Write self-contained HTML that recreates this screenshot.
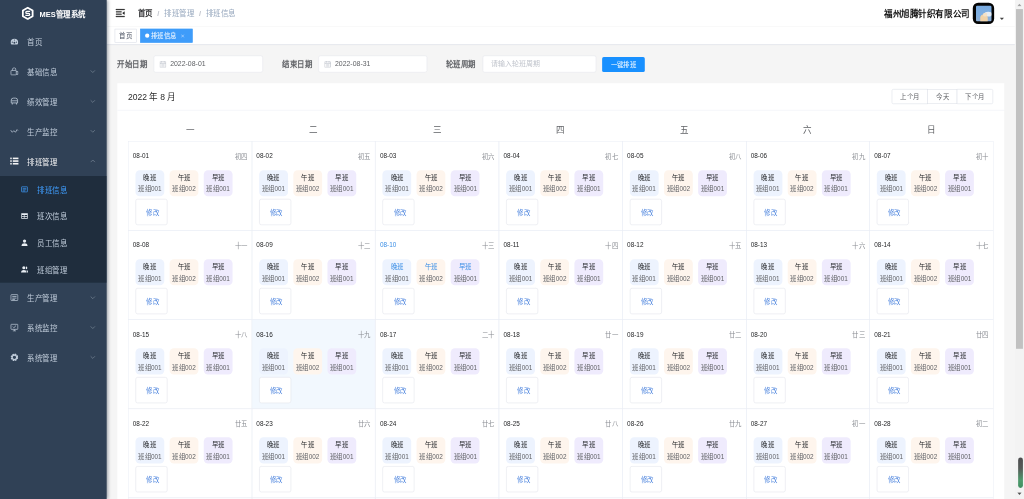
<!DOCTYPE html>
<html lang="zh-CN"><head><meta charset="utf-8"><title>MES管理系统</title><style>
*{box-sizing:border-box;margin:0;padding:0}
html,body{width:1024px;height:499px;overflow:hidden;background:#fff}
body{font-family:"Liberation Sans",sans-serif;color:#303133;font-size:14px;-webkit-font-smoothing:antialiased}
#app{filter:blur(.3px);position:absolute;left:0;top:0;width:1920px;height:936px;transform:scale(.5333333);transform-origin:0 0;overflow:hidden;background:#f5f5f5}
.a{position:absolute;white-space:nowrap}
/* sidebar */
#side{position:absolute;left:0;top:0;width:200px;height:936px;background:#304156;box-shadow:2px 0 6px rgba(0,21,41,.35);z-index:5;overflow:hidden}
#side .ttl{position:absolute;left:74px;top:1px;width:110px;line-height:51px;font-size:14px;font-weight:700;color:#fff;white-space:nowrap}
.mi{position:absolute;left:0;width:200px;height:56px;line-height:56px;color:#bfcbd9;font-size:14px;white-space:nowrap}
.mi .tx{position:absolute;left:51px;top:1.500px}
.mi svg.ic{position:absolute;left:19px;top:20px;width:16px;height:16px}
.mi .ar{position:absolute;left:168px;top:22px;width:12px;height:12px}
.sub{position:absolute;left:0;top:330px;width:200px;height:200px;background:#1f2d3d}
.si{position:absolute;left:0;width:200px;height:50px;line-height:50px;color:#bfcbd9;font-size:14px;white-space:nowrap}
.si .tx{position:absolute;left:70px;top:1.200px}
.si svg.ic{position:absolute;left:39px;top:18px;width:14px;height:14px}
/* navbar */
#nav{position:absolute;left:200px;top:0;width:1703px;height:50px;background:#fff;box-shadow:0 1px 4px rgba(0,21,41,.08)}
#tags{position:absolute;left:200px;top:50px;width:1703px;height:34px;background:#fff;border-bottom:1px solid #d8dce5;box-shadow:0 1px 3px 0 rgba(0,0,0,.12),0 0 3px 0 rgba(0,0,0,.04)}
.tag{position:absolute;top:4px;height:26px;line-height:25px;border:1px solid #d8dce5;background:#fff;color:#495060;font-size:12px;white-space:nowrap;overflow:hidden}
/* filter */
.lb{position:absolute;top:104px;height:32px;line-height:32px;font-size:14px;font-weight:700;color:#606266;white-space:nowrap}
.inp{position:absolute;top:104px;height:32px;background:#fff;border:1px solid #e4e7ec;border-radius:4px;font-size:13px;line-height:30px;color:#606266;white-space:nowrap;overflow:hidden}
/* calendar */
#card{position:absolute;left:220px;top:155.500px;width:1662.5px;height:800px;background:#fff}
#chead{position:absolute;left:0;top:0;width:1662.5px;height:51.500px;border-bottom:1px solid #ebeef5}
#chead .t{position:absolute;left:20px;top:1.500px;line-height:52px;font-size:16px;color:#2a2a2a;white-space:nowrap}
.bg{position:absolute;top:11.500px;height:28px;border:1px solid #dcdfe6;background:#fff;color:#606266;font-size:12px;line-height:26px;text-align:center;white-space:nowrap;overflow:hidden}
.wd{position:absolute;top:65px;height:46px;line-height:46px;width:232px;text-align:center;font-size:16px;color:#606266}
.cell{position:absolute;width:232.71px;height:168px;border:1px solid #ebeef5;overflow:hidden}
.cell.sel{background:#f2f8fe}
.cell .d{position:absolute;left:8px;top:18px;line-height:18px;font-size:12px;color:#1f2022;white-space:nowrap}
.cell .l{position:absolute;right:8px;top:19px;line-height:18px;font-size:12px;color:#8a8d93;white-space:nowrap;text-align:right}
.tg{position:absolute;top:53px;width:54px;height:49px;border-radius:8px;text-align:center;font-size:12px;white-space:nowrap;overflow:hidden}
.tg b{position:absolute;left:-10px;width:74px;top:5px;line-height:18px;font-weight:400;color:#1f2124;font-size:12px}
.tg i{position:absolute;left:-10px;width:74px;top:27px;line-height:18px;font-style:normal;color:#606266;font-size:12px}
.t1{left:13px;background:#edf3fe}
.t2{left:77px;background:#fef5ed}
.t3{left:141px;background:#efebfd}
.today .d,.today .tg b{color:#3a8ee6}
.bt{position:absolute;left:13px;top:107px;width:60px;height:49px;border:1px solid #e0e3ea;border-radius:4px;background:#fff;color:#4f86de;font-size:12px;line-height:50px;text-align:center;white-space:nowrap;overflow:hidden;padding-left:5px}
/* scrollbar */
#sb{position:absolute;left:1903px;top:0;width:17px;height:936px;background:#f3f3f3;z-index:9}
</style></head><body>
<div id="app">
<div id="side">
<svg class="a" style="left:39.500px;top:12px;width:24px;height:26px" viewBox="0 0 27 28"><path d="M13.500 2.200L23.800 8v12L13.500 25.800 3.200 20V8z" fill="none" stroke="#fff" stroke-width="3.800" stroke-linejoin="round"/><path d="M18.500 10h-7a2.100 2.100 0 0 0 0 4.200h4a2.100 2.100 0 0 1 0 4.200h-7" fill="none" stroke="#fff" stroke-width="2.700"/></svg><div class="ttl">MES管理系统</div>
<div class="mi" style="top:50px;color:#bfcbd9"><svg class="ic" viewBox="0 0 16 16"><path d="M8 2.5a7 7 0 0 0-7 7c0 1.6.5 3 1.4 4h11.2c.9-1 1.4-2.4 1.4-4a7 7 0 0 0-7-7z" fill="#bfcbd9"/><circle cx="8" cy="10" r="1.8" fill="#304156"/><circle cx="4" cy="9" r="1" fill="#304156"/><circle cx="12" cy="9" r="1" fill="#304156"/><circle cx="8" cy="5" r="1" fill="#304156"/></svg><span class="tx">首页</span></div>
<div class="mi" style="top:106px;color:#bfcbd9"><svg class="ic" viewBox="0 0 16 16" fill="none" stroke="#bfcbd9" stroke-width="1.4"><rect x="1.5" y="6" width="10" height="8.5" rx="1"/><path d="M4.5 6V4a3 3 0 0 1 6 0v2M11.5 8h3v5.5h-3"/></svg><span class="tx">基础信息</span><svg class="ar" viewBox="0 0 12 12" fill="none" stroke="#7f8d9e" stroke-width="1.200"><path d="M2 4l4 4 4-4"/></svg></div>
<div class="mi" style="top:162px;color:#bfcbd9"><svg class="ic" viewBox="0 0 16 16" fill="none" stroke="#bfcbd9" stroke-width="1.5"><path d="M2 11V6a4 4 0 0 1 4-4h4a4 4 0 0 1 4 4v5zM4 11v3M12 11v3M2 7h12"/></svg><span class="tx">绩效管理</span><svg class="ar" viewBox="0 0 12 12" fill="none" stroke="#7f8d9e" stroke-width="1.200"><path d="M2 4l4 4 4-4"/></svg></div>
<div class="mi" style="top:218px;color:#bfcbd9"><svg class="ic" viewBox="0 0 16 16" fill="none" stroke="#bfcbd9" stroke-width="1.4"><path d="M1 6l3 4 3-3 3 3 3-5 2 2"/></svg><span class="tx">生产监控</span><svg class="ar" viewBox="0 0 12 12" fill="none" stroke="#7f8d9e" stroke-width="1.200"><path d="M2 4l4 4 4-4"/></svg></div>
<div class="mi" style="top:274px;color:#f4f4f5"><svg class="ic" viewBox="0 0 16 16" fill="#f4f4f5"><rect x="0" y="1.5" width="3" height="3"/><rect x="5" y="1.5" width="11" height="3"/><rect x="0" y="6.5" width="3" height="3"/><rect x="5" y="6.5" width="11" height="3"/><rect x="0" y="11.5" width="3" height="3"/><rect x="5" y="11.5" width="11" height="3"/></svg><span class="tx">排班管理</span><svg class="ar" viewBox="0 0 12 12" fill="none" stroke="#7f8d9e" stroke-width="1.200"><path d="M2 8l4-4 4 4"/></svg></div>
<div class="sub">
<div class="si" style="top:0px;color:#409eff"><svg class="ic" viewBox="0 0 16 16" fill="none" stroke="#409eff" stroke-width="1.4"><rect x="1.5" y="2.5" width="13" height="11" rx="1"/><path d="M4 6h8M4 9h8M4 11.5h5"/></svg><span class="tx">排班信息</span></div>
<div class="si" style="top:50px;color:#bfcbd9"><svg class="ic" viewBox="0 0 16 16" fill="#e8edf3"><path d="M1 2h14v12H1zM2.5 6v2.5h4V6zm5.5 0v2.5h5.500V6zM2.500 10v2.500h4V10zm5.500 0v2.500h5.500V10z" fill-rule="evenodd"/></svg><span class="tx">班次信息</span></div>
<div class="si" style="top:100px;color:#bfcbd9"><svg class="ic" viewBox="0 0 16 16" fill="#e8edf3"><circle cx="8" cy="4.500" r="3.500"/><path d="M1.500 15c0-4 3-5.500 6.500-5.500s6.500 1.500 6.500 5.500z"/></svg><span class="tx">员工信息</span></div>
<div class="si" style="top:150px;color:#bfcbd9"><svg class="ic" viewBox="0 0 16 16" fill="#e8edf3"><circle cx="6.500" cy="4.500" r="3.300"/><path d="M0.500 15c0-4 2.700-5.500 6-5.500s6 1.500 6 5.500z"/><path d="M11 2a3 3 0 0 1 0 6zM12.500 9.500c2 .5 3 2.500 3 5.500h-2z"/></svg><span class="tx">班组管理</span></div>
</div>
<div class="mi" style="top:530px"><svg class="ic" viewBox="0 0 16 16" fill="none" stroke="#bfcbd9" stroke-width="1.4"><rect x="1.5" y="2.5" width="13" height="11" rx="1"/><path d="M4 6h8M4 9h8M4 11.5h5"/></svg><span class="tx">生产管理</span><svg class="ar" viewBox="0 0 12 12" fill="none" stroke="#7f8d9e" stroke-width="1.200"><path d="M2 4l4 4 4-4"/></svg></div>
<div class="mi" style="top:586px"><svg class="ic" viewBox="0 0 16 16" fill="none" stroke="#bfcbd9" stroke-width="1.4"><rect x="1.500" y="2" width="13" height="9.500" rx="1"/><path d="M5 14.500h6M8 11.500v3M5 6.500l2 2 4-4"/></svg><span class="tx">系统监控</span><svg class="ar" viewBox="0 0 12 12" fill="none" stroke="#7f8d9e" stroke-width="1.200"><path d="M2 4l4 4 4-4"/></svg></div>
<div class="mi" style="top:642px"><svg class="ic" viewBox="0 0 16 16"><circle cx="8" cy="8" r="5.200" fill="none" stroke="#bfcbd9" stroke-width="3.600" stroke-dasharray="2.700 1.380"/><circle cx="8" cy="8" r="4.400" fill="none" stroke="#bfcbd9" stroke-width="2.400"/></svg><span class="tx">系统管理</span><svg class="ar" viewBox="0 0 12 12" fill="none" stroke="#7f8d9e" stroke-width="1.200"><path d="M2 4l4 4 4-4"/></svg></div>
</div>
<div id="nav">
<svg class="a" style="left:14.500px;top:14px;width:21px;height:21px;transform:rotate(180deg)" viewBox="0 0 1024 1024" fill="#111" stroke="#111" stroke-width="26"><path d="M408 442h480c4.400 0 8-3.600 8-8v-56c0-4.400-3.600-8-8-8H408c-4.400 0-8 3.600-8 8v56c0 4.400 3.600 8 8 8zm-8 204c0 4.400 3.600 8 8 8h480c4.400 0 8-3.600 8-8v-56c0-4.400-3.600-8-8-8H408c-4.400 0-8 3.600-8 8v56zm504-486H120c-4.400 0-8 3.600-8 8v56c0 4.400 3.600 8 8 8h784c4.400 0 8-3.600 8-8v-56c0-4.400-3.600-8-8-8zm0 632H120c-4.400 0-8 3.600-8 8v56c0 4.400 3.600 8 8 8h784c4.400 0 8-3.600 8-8v-56c0-4.400-3.600-8-8-8zM142.400 642.100L298.700 519a8.840 8.840 0 0 0 0-13.900L142.400 381.900c-5.800-4.600-14.400-.5-14.400 6.900v246.300a8.900 8.900 0 0 0 14.400 7z"/></svg><span class="a" style="left:58px;top:0;line-height:51px;font-size:14px;font-weight:700;color:#303133">首页</span><span class="a" style="left:95px;top:0;line-height:51px;font-size:14px;font-weight:700;color:#c0c4cc">/</span><span class="a" style="left:108px;top:0;line-height:51px;font-size:14px;color:#97a8be">排班管理</span><span class="a" style="left:173px;top:0;line-height:51px;font-size:14px;font-weight:700;color:#c0c4cc">/</span><span class="a" style="left:186px;top:0;line-height:51px;font-size:14px;color:#97a8be">排班信息</span>
<span class="a" style="left:1456px;width:162px;text-align:right;top:1.500px;line-height:50px;font-size:16px;font-weight:700;color:#111">福州旭腾针织有限公司</span><div class="a" style="left:1624px;top:5px;width:40px;height:40px;border-radius:10px;background:#050505;overflow:hidden"><div class="a" style="left:5.500px;top:5.500px;width:29.500px;height:29.500px;border-radius:2px;overflow:hidden;background:linear-gradient(180deg,#78aae0 0%,#80b0e2 55%,#8fb0d6 100%)"><div class="a" style="left:16px;top:11px;width:14px;height:9px;border-radius:50%;background:#e6ecf3"></div><div class="a" style="left:8px;top:16px;width:14px;height:15px;border-radius:45% 45% 15% 15%;background:#f1d3a9"></div><div class="a" style="left:13px;top:13px;width:8px;height:7px;border-radius:50%;background:#f4e2c8"></div></div></div><svg class="a" style="left:1673.500px;top:32px;width:9px;height:7px" viewBox="0 0 10 8"><path d="M0.500 1.500h9L5 6.500z" fill="#444"/></svg>
</div>
<div id="tags"><div class="tag" style="left:15px;width:41px;padding-left:8px">首页</div><div class="tag" style="left:63px;width:97.500px;background:#3e9cfa;border-color:#3e9cfa;color:#fff"><span class="a" style="left:8px;top:8px;width:8px;height:8px;border-radius:50%;background:#fff"></span><span class="a" style="left:19px;top:0">排班信息</span><svg class="a" style="left:75px;top:9px;width:7px;height:7px" viewBox="0 0 7 7" stroke="#dbeaff" stroke-width="1" fill="none"><path d="M0.500 0.500l6 6M6.500 0.500l-6 6"/></svg></div></div>
<span class="lb" style="left:220px;width:57px">开始日期</span><div class="inp" style="left:288px;width:205px"><svg class="a" style="left:10px;top:9px;width:13px;height:13px" viewBox="0 0 13 13" fill="none" stroke="#c0c4cc" stroke-width="1.200"><rect x="1" y="2" width="11" height="10"/><path d="M1 5h11M4 0.500v3M9 0.500v3M3.500 7.500h6M3.500 9.800h6"/></svg><span class="a" style="left:30px;top:0">2022-08-01</span></div>
<span class="lb" style="left:529px;width:57px">结束日期</span><div class="inp" style="left:597px;width:204px"><svg class="a" style="left:10px;top:9px;width:13px;height:13px" viewBox="0 0 13 13" fill="none" stroke="#c0c4cc" stroke-width="1.200"><rect x="1" y="2" width="11" height="10"/><path d="M1 5h11M4 0.500v3M9 0.500v3M3.500 7.500h6M3.500 9.800h6"/></svg><span class="a" style="left:30px;top:0">2022-08-31</span></div>
<span class="lb" style="left:836px;width:57px">轮班周期</span><div class="inp" style="left:905px;width:213px"><span class="a" style="left:15px;top:0;color:#c0c4cc">请输入轮班周期</span></div>
<div class="a" style="left:1129px;top:107px;width:80px;height:28px;border-radius:3px;background:#1890ff;color:#fff;font-size:12px;line-height:28px;text-align:center;overflow:hidden">一键排班</div>
<div id="card">
<div id="chead"><span class="t">2022 年 8 月</span><div class="bg" style="left:1452.300px;width:68px;border-radius:3px 0 0 3px">上个月</div><div class="bg" style="left:1519.300px;width:56px">今天</div><div class="bg" style="left:1574.300px;width:68px;border-radius:0 3px 3px 0">下个月</div></div>
<div class="wd" style="left:20.00px">一</div><div class="wd" style="left:251.71px">二</div><div class="wd" style="left:483.43px">三</div><div class="wd" style="left:715.14px">四</div><div class="wd" style="left:946.86px">五</div><div class="wd" style="left:1178.57px">六</div><div class="wd" style="left:1410.29px">日</div>
<div class="cell" style="left:20.00px;top:109.5px"><span class="d">08-01</span><span class="l">初四</span><div class="tg t1"><b>晚班</b><i>班组001</i></div><div class="tg t2"><b>午班</b><i>班组002</i></div><div class="tg t3"><b>早班</b><i>班组001</i></div><div class="bt">修改</div></div>
<div class="cell" style="left:251.71px;top:109.5px"><span class="d">08-02</span><span class="l">初五</span><div class="tg t1"><b>晚班</b><i>班组001</i></div><div class="tg t2"><b>午班</b><i>班组002</i></div><div class="tg t3"><b>早班</b><i>班组001</i></div><div class="bt">修改</div></div>
<div class="cell" style="left:483.43px;top:109.5px"><span class="d">08-03</span><span class="l">初六</span><div class="tg t1"><b>晚班</b><i>班组001</i></div><div class="tg t2"><b>午班</b><i>班组002</i></div><div class="tg t3"><b>早班</b><i>班组001</i></div><div class="bt">修改</div></div>
<div class="cell" style="left:715.14px;top:109.5px"><span class="d">08-04</span><span class="l">初七</span><div class="tg t1"><b>晚班</b><i>班组001</i></div><div class="tg t2"><b>午班</b><i>班组002</i></div><div class="tg t3"><b>早班</b><i>班组001</i></div><div class="bt">修改</div></div>
<div class="cell" style="left:946.86px;top:109.5px"><span class="d">08-05</span><span class="l">初八</span><div class="tg t1"><b>晚班</b><i>班组001</i></div><div class="tg t2"><b>午班</b><i>班组002</i></div><div class="tg t3"><b>早班</b><i>班组001</i></div><div class="bt">修改</div></div>
<div class="cell" style="left:1178.57px;top:109.5px"><span class="d">08-06</span><span class="l">初九</span><div class="tg t1"><b>晚班</b><i>班组001</i></div><div class="tg t2"><b>午班</b><i>班组002</i></div><div class="tg t3"><b>早班</b><i>班组001</i></div><div class="bt">修改</div></div>
<div class="cell" style="left:1410.29px;top:109.5px"><span class="d">08-07</span><span class="l">初十</span><div class="tg t1"><b>晚班</b><i>班组001</i></div><div class="tg t2"><b>午班</b><i>班组002</i></div><div class="tg t3"><b>早班</b><i>班组001</i></div><div class="bt">修改</div></div>
<div class="cell" style="left:20.00px;top:276.5px"><span class="d">08-08</span><span class="l">十一</span><div class="tg t1"><b>晚班</b><i>班组001</i></div><div class="tg t2"><b>午班</b><i>班组002</i></div><div class="tg t3"><b>早班</b><i>班组001</i></div><div class="bt">修改</div></div>
<div class="cell" style="left:251.71px;top:276.5px"><span class="d">08-09</span><span class="l">十二</span><div class="tg t1"><b>晚班</b><i>班组001</i></div><div class="tg t2"><b>午班</b><i>班组002</i></div><div class="tg t3"><b>早班</b><i>班组001</i></div><div class="bt">修改</div></div>
<div class="cell today" style="left:483.43px;top:276.5px"><span class="d">08-10</span><span class="l">十三</span><div class="tg t1"><b>晚班</b><i>班组001</i></div><div class="tg t2"><b>午班</b><i>班组002</i></div><div class="tg t3"><b>早班</b><i>班组001</i></div><div class="bt">修改</div></div>
<div class="cell" style="left:715.14px;top:276.5px"><span class="d">08-11</span><span class="l">十四</span><div class="tg t1"><b>晚班</b><i>班组001</i></div><div class="tg t2"><b>午班</b><i>班组002</i></div><div class="tg t3"><b>早班</b><i>班组001</i></div><div class="bt">修改</div></div>
<div class="cell" style="left:946.86px;top:276.5px"><span class="d">08-12</span><span class="l">十五</span><div class="tg t1"><b>晚班</b><i>班组001</i></div><div class="tg t2"><b>午班</b><i>班组002</i></div><div class="tg t3"><b>早班</b><i>班组001</i></div><div class="bt">修改</div></div>
<div class="cell" style="left:1178.57px;top:276.5px"><span class="d">08-13</span><span class="l">十六</span><div class="tg t1"><b>晚班</b><i>班组001</i></div><div class="tg t2"><b>午班</b><i>班组002</i></div><div class="tg t3"><b>早班</b><i>班组001</i></div><div class="bt">修改</div></div>
<div class="cell" style="left:1410.29px;top:276.5px"><span class="d">08-14</span><span class="l">十七</span><div class="tg t1"><b>晚班</b><i>班组001</i></div><div class="tg t2"><b>午班</b><i>班组002</i></div><div class="tg t3"><b>早班</b><i>班组001</i></div><div class="bt">修改</div></div>
<div class="cell" style="left:20.00px;top:443.5px"><span class="d">08-15</span><span class="l">十八</span><div class="tg t1"><b>晚班</b><i>班组001</i></div><div class="tg t2"><b>午班</b><i>班组002</i></div><div class="tg t3"><b>早班</b><i>班组001</i></div><div class="bt">修改</div></div>
<div class="cell sel" style="left:251.71px;top:443.5px"><span class="d">08-16</span><span class="l">十九</span><div class="tg t1"><b>晚班</b><i>班组001</i></div><div class="tg t2"><b>午班</b><i>班组002</i></div><div class="tg t3"><b>早班</b><i>班组001</i></div><div class="bt">修改</div></div>
<div class="cell" style="left:483.43px;top:443.5px"><span class="d">08-17</span><span class="l">二十</span><div class="tg t1"><b>晚班</b><i>班组001</i></div><div class="tg t2"><b>午班</b><i>班组002</i></div><div class="tg t3"><b>早班</b><i>班组001</i></div><div class="bt">修改</div></div>
<div class="cell" style="left:715.14px;top:443.5px"><span class="d">08-18</span><span class="l">廿一</span><div class="tg t1"><b>晚班</b><i>班组001</i></div><div class="tg t2"><b>午班</b><i>班组002</i></div><div class="tg t3"><b>早班</b><i>班组001</i></div><div class="bt">修改</div></div>
<div class="cell" style="left:946.86px;top:443.5px"><span class="d">08-19</span><span class="l">廿二</span><div class="tg t1"><b>晚班</b><i>班组001</i></div><div class="tg t2"><b>午班</b><i>班组002</i></div><div class="tg t3"><b>早班</b><i>班组001</i></div><div class="bt">修改</div></div>
<div class="cell" style="left:1178.57px;top:443.5px"><span class="d">08-20</span><span class="l">廿三</span><div class="tg t1"><b>晚班</b><i>班组001</i></div><div class="tg t2"><b>午班</b><i>班组002</i></div><div class="tg t3"><b>早班</b><i>班组001</i></div><div class="bt">修改</div></div>
<div class="cell" style="left:1410.29px;top:443.5px"><span class="d">08-21</span><span class="l">廿四</span><div class="tg t1"><b>晚班</b><i>班组001</i></div><div class="tg t2"><b>午班</b><i>班组002</i></div><div class="tg t3"><b>早班</b><i>班组001</i></div><div class="bt">修改</div></div>
<div class="cell" style="left:20.00px;top:610.5px"><span class="d">08-22</span><span class="l">廿五</span><div class="tg t1"><b>晚班</b><i>班组001</i></div><div class="tg t2"><b>午班</b><i>班组002</i></div><div class="tg t3"><b>早班</b><i>班组001</i></div><div class="bt">修改</div></div>
<div class="cell" style="left:251.71px;top:610.5px"><span class="d">08-23</span><span class="l">廿六</span><div class="tg t1"><b>晚班</b><i>班组001</i></div><div class="tg t2"><b>午班</b><i>班组002</i></div><div class="tg t3"><b>早班</b><i>班组001</i></div><div class="bt">修改</div></div>
<div class="cell" style="left:483.43px;top:610.5px"><span class="d">08-24</span><span class="l">廿七</span><div class="tg t1"><b>晚班</b><i>班组001</i></div><div class="tg t2"><b>午班</b><i>班组002</i></div><div class="tg t3"><b>早班</b><i>班组001</i></div><div class="bt">修改</div></div>
<div class="cell" style="left:715.14px;top:610.5px"><span class="d">08-25</span><span class="l">廿八</span><div class="tg t1"><b>晚班</b><i>班组001</i></div><div class="tg t2"><b>午班</b><i>班组002</i></div><div class="tg t3"><b>早班</b><i>班组001</i></div><div class="bt">修改</div></div>
<div class="cell" style="left:946.86px;top:610.5px"><span class="d">08-26</span><span class="l">廿九</span><div class="tg t1"><b>晚班</b><i>班组001</i></div><div class="tg t2"><b>午班</b><i>班组002</i></div><div class="tg t3"><b>早班</b><i>班组001</i></div><div class="bt">修改</div></div>
<div class="cell" style="left:1178.57px;top:610.5px"><span class="d">08-27</span><span class="l">初一</span><div class="tg t1"><b>晚班</b><i>班组001</i></div><div class="tg t2"><b>午班</b><i>班组002</i></div><div class="tg t3"><b>早班</b><i>班组001</i></div><div class="bt">修改</div></div>
<div class="cell" style="left:1410.29px;top:610.5px"><span class="d">08-28</span><span class="l">初二</span><div class="tg t1"><b>晚班</b><i>班组001</i></div><div class="tg t2"><b>午班</b><i>班组002</i></div><div class="tg t3"><b>早班</b><i>班组001</i></div><div class="bt">修改</div></div>
<div class="cell" style="left:20.00px;top:777.5px"><span class="d">08-29</span><span class="l">初三</span><div class="tg t1"><b>晚班</b><i>班组001</i></div><div class="tg t2"><b>午班</b><i>班组002</i></div><div class="tg t3"><b>早班</b><i>班组001</i></div><div class="bt">修改</div></div>
<div class="cell" style="left:251.71px;top:777.5px"><span class="d">08-30</span><span class="l">初四</span><div class="tg t1"><b>晚班</b><i>班组001</i></div><div class="tg t2"><b>午班</b><i>班组002</i></div><div class="tg t3"><b>早班</b><i>班组001</i></div><div class="bt">修改</div></div>
<div class="cell" style="left:483.43px;top:777.5px"><span class="d">08-31</span><span class="l">初五</span><div class="tg t1"><b>晚班</b><i>班组001</i></div><div class="tg t2"><b>午班</b><i>班组002</i></div><div class="tg t3"><b>早班</b><i>班组001</i></div><div class="bt">修改</div></div>
<div class="cell" style="left:715.14px;top:777.5px"><span class="d">09-01</span><span class="l">初六</span><div class="tg t1"><b>晚班</b><i>班组001</i></div><div class="tg t2"><b>午班</b><i>班组002</i></div><div class="tg t3"><b>早班</b><i>班组001</i></div><div class="bt">修改</div></div>
<div class="cell" style="left:946.86px;top:777.5px"><span class="d">09-02</span><span class="l">初七</span><div class="tg t1"><b>晚班</b><i>班组001</i></div><div class="tg t2"><b>午班</b><i>班组002</i></div><div class="tg t3"><b>早班</b><i>班组001</i></div><div class="bt">修改</div></div>
<div class="cell" style="left:1178.57px;top:777.5px"><span class="d">09-03</span><span class="l">初八</span><div class="tg t1"><b>晚班</b><i>班组001</i></div><div class="tg t2"><b>午班</b><i>班组002</i></div><div class="tg t3"><b>早班</b><i>班组001</i></div><div class="bt">修改</div></div>
<div class="cell" style="left:1410.29px;top:777.5px"><span class="d">09-04</span><span class="l">初九</span><div class="tg t1"><b>晚班</b><i>班组001</i></div><div class="tg t2"><b>午班</b><i>班组002</i></div><div class="tg t3"><b>早班</b><i>班组001</i></div><div class="bt">修改</div></div>
</div>
<div id="sb"><svg class="a" style="left:4px;top:6px;width:9px;height:6px" viewBox="0 0 9 6"><path d="M0.500 5.500L4.500 1l4 4.500z" fill="#a3a3a3"/></svg><div class="a" style="left:2px;top:17px;width:13px;height:637px;background:#c1c1c1"></div><div class="a" style="left:6px;top:858px;width:9px;height:57px;border-radius:5px;background:linear-gradient(180deg,#4d4d4f 0%,#555a58 35%,#4d9a6c 75%,#3f8f60 100%)"></div><svg class="a" style="left:4px;top:923px;width:9px;height:6px" viewBox="0 0 9 6"><path d="M0.500 0.500h8L4.500 5z" fill="#505050"/></svg></div>
</div>
</body></html>
